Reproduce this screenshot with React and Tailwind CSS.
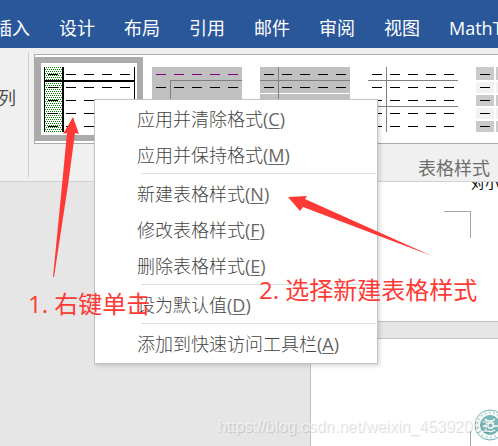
const TABS = ["插入", "设计", "布局", "引用", "邮件", "审阅", "视图", "MathType"];

const MENU_GROUPS = [
  [
    { label: "应用并清除格式", shortcut: "C" },
    { label: "应用并保持格式", shortcut: "M" },
  ],
  [
    { label: "新建表格样式", shortcut: "N" },
    { label: "修改表格样式", shortcut: "F" },
    { label: "删除表格样式", shortcut: "E" },
  ],
  [{ label: "设为默认值", shortcut: "D" }],
  [{ label: "添加到快速访问工具栏", shortcut: "A" }],
];

const ROWS = [0, 1, 2, 3, 4];

// Rows of short dashes that stand for the text in each cell
function Dashes({ firstRow = "#000" }) {
  return ROWS.map((row) =>
    ROWS.map((col) => (
      <rect
        key={`${row}-${col}`}
        x={col * 18 + 4}
        y={row * 13 + 7}
        width="10"
        height="1"
        fill={row === 0 ? firstRow : "#000"}
      />
    ))
  );
}

function DottedColumnStyle() {
  return (
    <>
      <defs>
        <pattern id="dots" width="4" height="4" patternUnits="userSpaceOnUse">
          <rect width="1" height="1" fill="#008000" />
          <rect x="2" width="1" height="1" fill="#008000" />
          <rect x="1" y="2" width="1" height="1" fill="#008000" />
          <rect x="3" y="2" width="1" height="1" fill="#008000" />
        </pattern>
      </defs>
      <rect x="1" width="17" height="65" fill="url(#dots)" />
      <rect width="1" height="65" />
      <rect x="18" width="2" height="65" />
      <rect x="90" width="1" height="65" />
      <rect y="13" width="91" height="2" />
      <Dashes />
    </>
  );
}

function GreyCornerStyle() {
  return (
    <>
      <rect width="90" height="65" fill="#c0c0c0" />
      <rect x="18" y="13" width="72" height="1" fill="#808080" />
      <rect x="18" y="13" width="1" height="52" fill="#808080" />
      <Dashes firstRow="#800080" />
    </>
  );
}

function GreyRowsStyle() {
  return (
    <>
      <rect width="90" height="65" fill="#c0c0c0" />
      <rect y="26" width="90" height="1" fill="#fff" />
      <rect y="52" width="90" height="1" fill="#fff" />
      <rect y="13" width="90" height="1" fill="#808080" />
      <rect x="18" width="1" height="65" fill="#808080" />
      <Dashes />
    </>
  );
}

function LinesStyle() {
  return (
    <>
      <rect y="13" width="90" height="1" fill="#808080" />
      <rect y="39" width="90" height="1" fill="#808080" />
      <rect x="18" width="1" height="65" fill="#808080" />
      <Dashes />
    </>
  );
}

function BandedStyle() {
  return (
    <>
      {ROWS.map((row) =>
        ROWS.map((col) => (
          <rect
            key={`${row}-${col}`}
            x={col === 0 ? 0 : col * 18 + 2}
            y={row === 0 ? 0 : row * 13 + 2}
            width={col === 0 ? 18 : 16}
            height={row === 0 ? 13 : 11}
            fill={row % 2 === 0 ? "#cacaca" : "#f2f2f2"}
          />
        ))
      )}
      <Dashes />
    </>
  );
}

const STYLES = [
  { name: "点状列", Drawing: DottedColumnStyle },
  { name: "灰色角", Drawing: GreyCornerStyle },
  { name: "灰色行", Drawing: GreyRowsStyle },
  { name: "线条", Drawing: LinesStyle },
  { name: "条纹", Drawing: BandedStyle },
];

function Tabs() {
  return (
    <nav className="flex h-12 shrink-0 items-center gap-[29px] overflow-hidden bg-[#2a579a] pt-2 -ml-1.5">
      {TABS.map((tab) => (
        <button
          key={tab}
          type="button"
          className="shrink-0 text-lg leading-6 text-white"
        >
          {tab}
        </button>
      ))}
    </nav>
  );
}

function Ribbon() {
  return (
    <section className="flex h-[134px] shrink-0 overflow-hidden border-b border-[#d2d2d2] bg-[#f0f0f0]">
      <div className="my-1 flex w-[29px] shrink-0 items-start border-r border-[#d0d0d0]">
        <span className="-ml-0.5 mt-[34px] text-lg leading-6 text-[#505050]">
          列
        </span>
      </div>
      <div className="ml-[5px] min-w-0 flex-1 pt-1.5">
        <div className="flex h-[90px] overflow-hidden border border-r-0 border-[#ababab] bg-white py-0.5">
          {STYLES.map(({ name, Drawing }, index) => (
            <button
              key={name}
              type="button"
              aria-label={name}
              className={`flex h-[84px] w-[108px] shrink-0 items-center justify-center ${
                index === 0 ? "border-[6px] border-[#ababab]" : ""
              }`}
            >
              <svg
                width="91"
                height="65"
                className="shrink-0"
                shapeRendering="crispEdges"
              >
                <Drawing />
              </svg>
            </button>
          ))}
        </div>
        <p className="mr-2 mt-3 text-right text-lg leading-6 text-[#6e6e6e]">
          表格样式
        </p>
      </div>
    </section>
  );
}

function Seal() {
  return (
    <svg
      width="32"
      height="32"
      viewBox="0 0 32 32"
      className="shrink-0"
      fill="none"
      stroke="#6fb1b1"
    >
      <circle cx="16" cy="16" r="15" strokeWidth="1" />
      <circle
        cx="16"
        cy="16"
        r="12.5"
        strokeWidth="2"
        strokeDasharray="2 2.4"
        opacity="0.5"
      />
      <circle cx="16" cy="16" r="9.5" fill="#7ab8b8" />
      <path
        d="M11 10l3 2h4l3-2M12 14h8M9 17h4l2 2h3l2-2h4M11 21c3 2 7 2 10 0M14 14v3M19 14v3"
        stroke="#fff"
        strokeWidth="1.5"
      />
    </svg>
  );
}

function Document() {
  return (
    <main className="flex flex-1 flex-col bg-[#e6e6e6] pl-[310px]">
      <div className="h-[140px] shrink-0 border-b border-l border-[#c0c0c0] bg-white">
        <div className="ml-[160px] h-2 overflow-hidden">
          <p className="-mt-2 whitespace-nowrap font-['Noto_Sans_CJK_SC',sans-serif] text-sm leading-4 text-black">
            对小
          </p>
        </div>
        <div className="ml-[133px] mt-[21px] h-[27px] w-[27px] border-r border-t border-[#a6a6a6]" />
      </div>
      <div className="mt-4 flex flex-1 items-start border-l border-t border-[#c0c0c0] bg-white">
        <div className="ml-[159px] mt-[92px] h-4 w-px shrink-0 bg-[#a6a6a6]" />
        <div className="ml-[3px] mt-[70px] w-6 shrink-0 overflow-hidden">
          <Seal />
        </div>
      </div>
    </main>
  );
}

function ContextMenu() {
  return (
    <div
      role="menu"
      className="absolute left-[94px] top-[99px] w-[284px] border border-[#c3c3c3] bg-white py-px shadow-[2px_2px_4px_rgba(0,0,0,0.15)]"
    >
      {MENU_GROUPS.map((group, index) => (
        <div key={group[0].shortcut}>
          {index > 0 && (
            <div className="ml-[46px] mr-px h-[3px] border-t border-[#dcdfe2]" />
          )}
          {group.map(({ label, shortcut }) => (
            <button
              key={shortcut}
              type="button"
              role="menuitem"
              className="flex h-9 w-full items-center pl-[42px] text-lg font-light leading-6 text-[#444]"
            >
              {label}
              <span className="font-normal text-[#666]">
                (
                <span className="underline underline-offset-2">{shortcut}</span>
                )
              </span>
            </button>
          ))}
        </div>
      ))}
    </div>
  );
}

function Annotations() {
  return (
    <div className="pointer-events-none absolute inset-0 text-2xl leading-8 text-[#ff3a36]">
      <svg className="absolute inset-0 h-full w-full" fill="#ff3a36">
        <polygon points="73,117 79,134 75,133 68,185 54,277 53,277 62,185 67,133 63,134" />
        <polygon points="288,197 307,196 305,199 432,256 303,207 300,211" />
      </svg>
      <p className="absolute left-7 top-[288px] whitespace-nowrap">
        1. 右键单击
      </p>
      <p className="absolute left-[259px] top-[274px] whitespace-nowrap">
        2. 选择新建表格样式
      </p>
      <p className="absolute left-[218px] top-[415px] whitespace-nowrap font-['Liberation_Sans',sans-serif] text-base leading-6 text-white/60 [text-shadow:1px_1px_1px_rgba(0,0,0,0.16)]">
        https://blog.csdn.net/weixin_45392081
      </p>
    </div>
  );
}

export default function App() {
  return (
    <div className="relative flex min-h-screen flex-col overflow-hidden bg-[#2a579a] font-['Open_Sans','Noto_Sans_CJK_SC',sans-serif]">
      <Tabs />
      <Ribbon />
      <Document />
      <ContextMenu />
      <Annotations />
    </div>
  );
}
